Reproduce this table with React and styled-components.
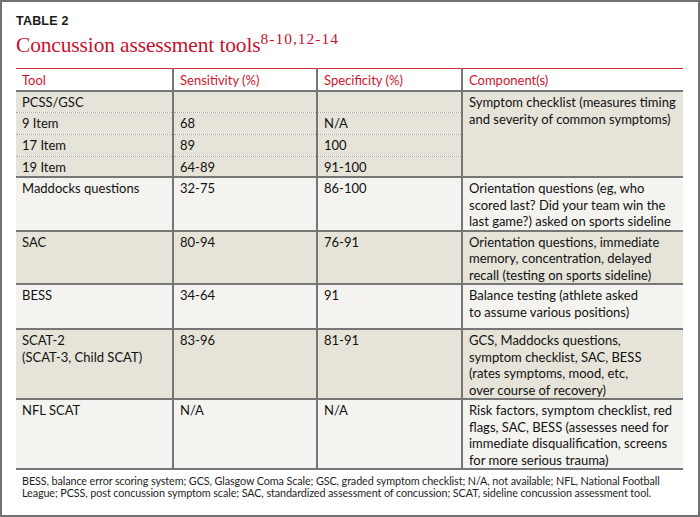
import styled, { createGlobalStyle } from "styled-components";

const GlobalStyle = createGlobalStyle`
  html, body {
    margin: 0;
    padding: 0;
    background: #ffffff;
  }
`;

const Frame = styled.div`
  box-sizing: border-box;
  width: 700px;
  height: 517px;
  border: 2px solid #727272;
  padding: 12px 14px 0 14px;
  background: #ffffff;
  font-family: "Lato", "Liberation Sans", sans-serif;
  color: #111111;
`;

const Label = styled.div`
  font-family: "Liberation Sans", sans-serif;
  font-weight: 700;
  font-size: 12.5px;
  line-height: 15px;
  letter-spacing: 0.2px;
  color: #1a1a1a;
`;

const Title = styled.h1`
  margin: 1px 0 0 0;
  font-family: "Liberation Serif", serif;
  font-weight: 400;
  font-size: 21.4px;
  line-height: 30px;
  height: 38px;
  color: #c8102e;
  letter-spacing: -0.1px;

  sup {
    font-size: 15.5px;
    vertical-align: 8px;
    line-height: 0;
    letter-spacing: 1px;
  }
`;

const Table = styled.table`
  width: 667px;
  border-collapse: collapse;
  table-layout: fixed;
  font-size: 13px;
  line-height: 16.5px;
  border-top: 1px solid #d42a35;
  border-bottom: 2px solid #767676;
`;

const Col = styled.col`
  width: ${(p) => p.$w}px;
`;

const HeadCell = styled.th`
  text-align: left;
  font-weight: 400;
  color: #d0142c;
  padding: 3px 6px 1px 6px;
  height: 17px;
  overflow: hidden;
  border-bottom: 2px solid #767676;
  & + & {
    border-left: 2px solid #767676;
  }
`;

const Row = styled.tr`
  background: ${(p) => (p.$shade ? "#e6e3d9" : "#f4f3ef")};
  height: ${(p) => p.$h}px;
  border-top: ${(p) =>
    p.$dotted ? "1px dotted #a8a6a0" : "2px solid #767676"};
`;

const Cell = styled.td`
  vertical-align: top;
  padding: 2px 6px 0 6px;
  white-space: nowrap;
  overflow: hidden;
  & + & {
    border-left: 2px solid #767676;
  }
`;

const Footnote = styled.p`
  margin: 5px 0 0 0;
  padding: 0 6px;
  font-size: 10.8px;
  line-height: 11.5px;
  letter-spacing: -0.1px;
  color: #1e1e1e;
`;

const groups = [
  {
    shade: true,
    rows: [
      ["PCSS/GSC", "", "", 21],
      ["9 Item", "68", "N/A", 22],
      ["17 Item", "89", "100", 22],
      ["19 Item", "64-89", "91-100", 21],
    ],
    component: [
      "Symptom checklist (measures timing",
      "and severity of common symptoms)",
    ],
  },
  {
    shade: false,
    rows: [["Maddocks questions", "32-75", "86-100", 53]],
    component: [
      "Orientation questions (eg, who",
      "scored last? Did your team win the",
      "last game?) asked on sports sideline",
    ],
  },
  {
    shade: true,
    rows: [["SAC", "80-94", "76-91", 52]],
    component: [
      "Orientation questions, immediate",
      "memory, concentration, delayed",
      "recall (testing on sports sideline)",
    ],
  },
  {
    shade: false,
    rows: [["BESS", "34-64", "91", 45]],
    component: ["Balance testing (athlete asked", "to assume various positions)"],
  },
  {
    shade: true,
    rows: [[["SCAT-2", "(SCAT-3, Child SCAT)"], "83-96", "81-91", 68]],
    component: [
      "GCS, Maddocks questions,",
      "symptom checklist, SAC, BESS",
      "(rates symptoms, mood, etc,",
      "over course of recovery)",
    ],
  },
  {
    shade: false,
    rows: [["NFL SCAT", "N/A", "N/A", 70]],
    component: [
      "Risk factors, symptom checklist, red",
      "flags, SAC, BESS (assesses need for",
      "immediate disqualification, screens",
      "for more serious trauma)",
    ],
  },
];

const Lines = ({ lines }) =>
  (Array.isArray(lines) ? lines : [lines]).map((l, i) => (
    <span key={i}>
      {i > 0 && <br />}
      {l}
    </span>
  ));

export default function App() {
  return (
    <>
      <GlobalStyle />
      <Frame>
        <Label>TABLE 2</Label>
        <Title>
          Concussion assessment tools<sup>8-10,12-14</sup>
        </Title>
        <Table>
          <colgroup>
            <Col $w={157} />
            <Col $w={144} />
            <Col $w={145} />
            <Col $w={221} />
          </colgroup>
          <thead>
            <tr>
              <HeadCell>Tool</HeadCell>
              <HeadCell>Sensitivity (%)</HeadCell>
              <HeadCell>Specificity (%)</HeadCell>
              <HeadCell>Component(s)</HeadCell>
            </tr>
          </thead>
          <tbody>
            {groups.map((g, gi) =>
              g.rows.map(([tool, sens, spec, h], ri) => (
                <Row
                  key={`${gi}-${ri}`}
                  $shade={g.shade}
                  $h={h}
                  $dotted={ri > 0}
                >
                  <Cell>
                    <Lines lines={tool} />
                  </Cell>
                  <Cell>{sens}</Cell>
                  <Cell>{spec}</Cell>
                  {ri === 0 && (
                    <Cell rowSpan={g.rows.length}>
                      <Lines lines={g.component} />
                    </Cell>
                  )}
                </Row>
              ))
            )}
          </tbody>
        </Table>
        <Footnote>
          BESS, balance error scoring system; GCS, Glasgow Coma Scale; GSC,
          graded symptom checklist; N/A, not available; NFL, National Football
          League; PCSS, post concussion symptom scale; SAC, standardized
          assessment of concussion; SCAT, sideline concussion assessment tool.
        </Footnote>
      </Frame>
    </>
  );
}
